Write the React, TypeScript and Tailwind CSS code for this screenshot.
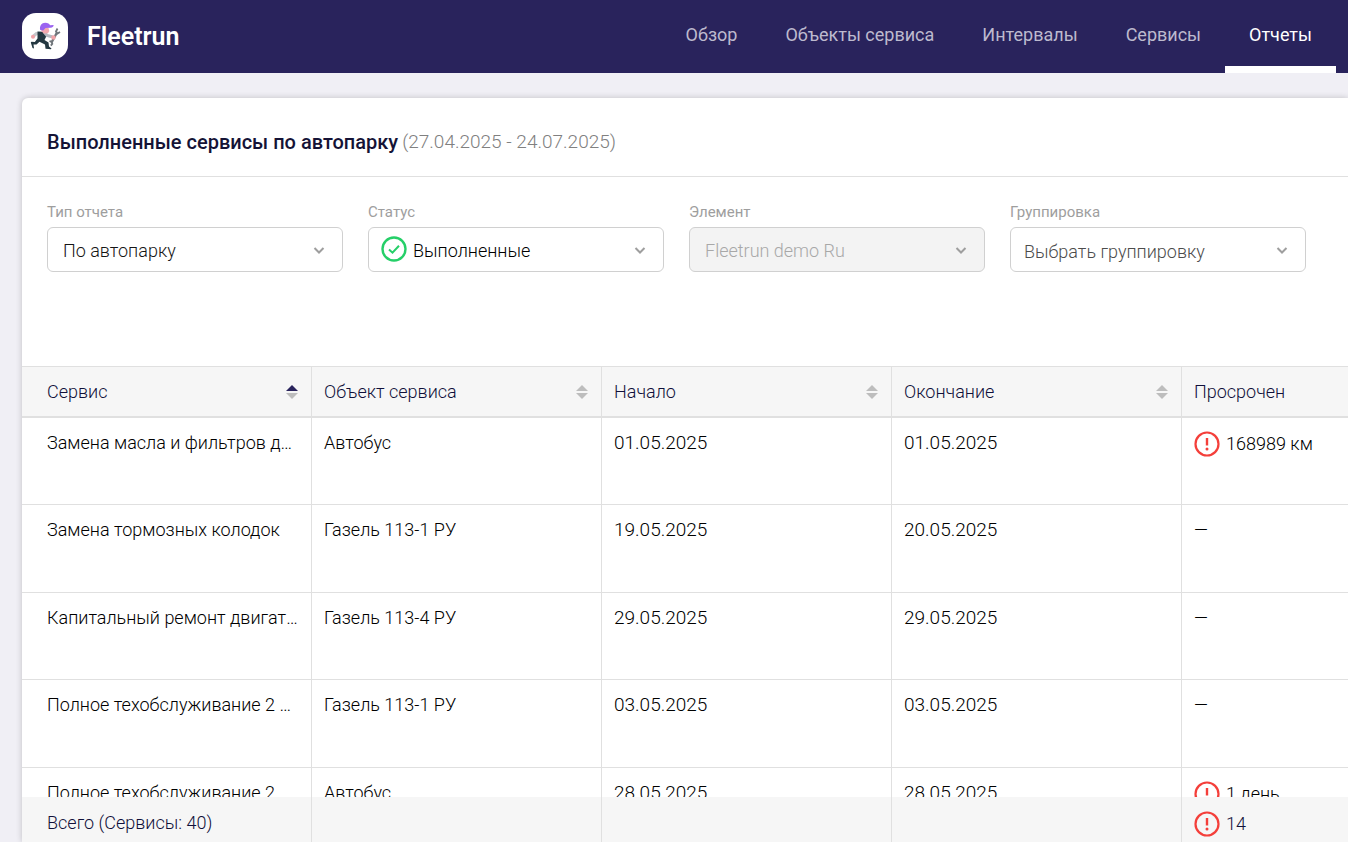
import type { ReactNode } from "react";

const navItems = ["Обзор", "Объекты сервиса", "Интервалы", "Сервисы", "Отчеты"];
const activeItem = "Отчеты";

type Row = {
  service: string;
  unit: string;
  start: string;
  end: string;
  overdue?: string;
};

const rows: Row[] = [
  { service: "Замена масла и фильтров д…", unit: "Автобус", start: "01.05.2025", end: "01.05.2025", overdue: "168989 км" },
  { service: "Замена тормозных колодок", unit: "Газель 113-1 РУ", start: "19.05.2025", end: "20.05.2025" },
  { service: "Капитальный ремонт двигат…", unit: "Газель 113-4 РУ", start: "29.05.2025", end: "29.05.2025" },
  { service: "Полное техобслуживание 2 …", unit: "Газель 113-1 РУ", start: "03.05.2025", end: "03.05.2025" },
  { service: "Полное техобслуживание 2 …", unit: "Автобус", start: "28.05.2025", end: "28.05.2025", overdue: "1 день" },
];

const columns = ["Сервис", "Объект сервиса", "Начало", "Окончание", "Просрочен"];

function Logo() {
  return (
    <svg viewBox="0 0 46 46" className="size-[46px] rounded-[14px] bg-white" aria-hidden="true">
      <path d="M19 20 14.500 20.500 11 23.500" fill="none" stroke="#c4c6ca" strokeWidth="3" strokeLinecap="round" />
      <circle cx="11" cy="23.800" r="2" fill="#f0a3a8" />
      <path d="M15.500 18.500 23 19 24.500 23 22.500 27 26.500 29.500 27 33.500 29.500 35.500 29 36.200 23.500 35.700 23 31.500 17.500 28.800 14.500 31.500 11.500 31.500 12 35.500 10.500 35 8.800 29.500 9.500 28.800 12.800 29 15.500 25.500Z" fill="#243841" />
      <path d="M22.500 19.500 25 22.500 30 23.800" fill="none" stroke="#b4b7be" strokeWidth="3" strokeLinecap="round" />
      <path d="M19 15h7.500l.8 3-1.300 2.300-4 .2-2.500-2Z" fill="#f3a9ae" />
      <path d="M18.200 17c-1-4 1.500-7.200 5-7.200 2.700 0 4.300 1.200 4.800 2.500l3.500-.3c.5 1.500-1 2.500-3 2.800l-5 .3-2.300 2.400Z" fill="#9b63f0" />
      <path d="m29.500 29.500 5.500-10" stroke="#6f767b" strokeWidth="2.400" />
      <path d="m35.500 15.500-1.500 3 1.500 2 2.500-1.500M27.500 28l2 .8.8 2-1.500 1.800" fill="none" stroke="#6f767b" strokeWidth="1.800" />
      <circle cx="31.500" cy="24.500" r="2.200" fill="#f0a3a8" />
    </svg>
  );
}

function AlertIcon() {
  return (
    <svg viewBox="0 0 26 26" className="size-[26px] shrink-0" fill="none" aria-hidden="true">
      <circle cx="13" cy="13" r="11.500" stroke="#f43f3a" strokeWidth="2.200" />
      <path d="M13 7v7.500" stroke="#f43f3a" strokeWidth="2.400" />
      <circle cx="13" cy="18" r="1.500" fill="#f43f3a" />
    </svg>
  );
}

function CheckIcon() {
  return (
    <svg viewBox="0 0 26 26" className="size-[26px]" fill="none" aria-hidden="true">
      <circle cx="13" cy="13" r="11.500" stroke="#25cf68" strokeWidth="2.400" />
      <path d="m8 13.500 3.500 3.200 6.500-7" stroke="#25cf68" strokeWidth="2" />
    </svg>
  );
}

function SortIcon({ active }: { active?: boolean }) {
  return (
    <svg viewBox="0 0 12 14" className="h-[14px] w-3 shrink-0" aria-hidden="true">
      <path d="M0 6 6 0l6 6Z" fill={active ? "#29235c" : "#bdbdbd"} />
      <path d="M0 8h12l-6 6Z" fill="#bdbdbd" />
    </svg>
  );
}

type FilterProps = {
  id: string;
  label: string;
  value: string;
  className: string;
  icon?: ReactNode;
  disabled?: boolean;
};

function Filter({ id, label, value, className, icon, disabled }: FilterProps) {
  return (
    <div className="w-[296px] shrink-0">
      <label htmlFor={id} className="block text-[15px] leading-5 text-[#9e9e9e]">
        {label}
      </label>
      <div className="relative mt-[5px]">
        {icon && <span className="pointer-events-none absolute top-[9px] left-[13px]">{icon}</span>}
        <select
          id={id}
          disabled={disabled}
          className={`h-[45px] w-full appearance-none rounded-md border border-[#d0d0d0] pr-10 text-lg font-light opacity-100 ${className}`}
        >
          <option>{value}</option>
        </select>
        <svg
          viewBox="0 0 12 8"
          className="pointer-events-none absolute top-[20px] right-[18px] h-2 w-3"
          fill="none"
          stroke="#9e9e9e"
          strokeWidth="2"
          aria-hidden="true"
        >
          <path d="m1.500 1 4.500 4.500 4.500-4.500" />
        </svg>
      </div>
    </div>
  );
}

function Overdue({ value }: { value?: string }) {
  if (!value) return <>—</>;
  return (
    <span className="flex items-center gap-1.5">
      <AlertIcon />
      {value}
    </span>
  );
}

export default function App() {
  return (
    <div className="flex h-screen flex-col overflow-hidden bg-[#f0eff5] font-[Roboto,sans-serif] text-black">
      <header className="flex h-[73px] shrink-0 items-center justify-between bg-[#29235c] pr-3 pl-[22px]">
        <a href="#" className="flex items-center gap-[19px] pb-0.5">
          <Logo />
          <span className="pt-0.5 text-[25px] font-semibold text-white">Fleetrun</span>
        </a>
        <nav className="flex h-full">
          {navItems.map((item) => (
            <a
              key={item}
              href="#"
              className={`flex items-center border-y-[7px] border-t-transparent px-6 pb-1 text-lg whitespace-nowrap ${
                item === activeItem ? "border-b-white text-white" : "border-b-transparent text-[#bdbace]"
              }`}
            >
              {item}
            </a>
          ))}
        </nav>
      </header>

      <main className="mt-[25px] ml-[22px] flex min-h-0 flex-1 flex-col rounded-tl-md bg-white shadow-[0_0_6px_rgba(0,0,0,0.2)]">
        <div className="flex h-[79px] shrink-0 items-center gap-1 border-b border-[#e0e0e0] pt-2.5 pl-[25px]">
          <h1 className="text-xl font-medium text-[#151336]">Выполненные сервисы по автопарку</h1>
          <span className="text-[19px] font-light text-[#808080]">(27.04.2025 - 24.07.2025)</span>
        </div>

        <form className="flex h-[189px] shrink-0 gap-[25px] pt-[25px] pl-[25px]">
          <Filter id="type" label="Тип отчета" value="По автопарку" className="pt-0.5 pl-[15px] text-[#151515]" />
          <Filter
            id="status"
            label="Статус"
            value="Выполненные"
            className="pt-0.5 pl-11 text-black"
            icon={<CheckIcon />}
          />
          <Filter
            id="element"
            label="Элемент"
            value="Fleetrun demo Ru"
            className="bg-[#f3f3f3] pt-0.5 pl-[15px] text-[#a8a8a8]"
            disabled
          />
          <Filter id="group" label="Группировка" value="Выбрать группировку" className="pt-1 pl-[13px] text-[#4c4c4c]" />
        </form>

        <div className="min-h-0 flex-1 overflow-auto [scrollbar-width:none]">
          <table className="w-full min-w-[1326px] table-fixed border-separate border-spacing-0 text-left text-lg font-light">
            <colgroup>
              <col className="w-[290px]" />
              <col className="w-[290px]" />
              <col className="w-[290px]" />
              <col className="w-[290px]" />
              <col />
            </colgroup>
            <thead className="sticky top-0 z-10 bg-[#f6f6f6] text-[#10103a]">
              <tr className="h-[52px]">
                {columns.map((column, i) => (
                  <th
                    key={column}
                    className="border-t border-r border-b-2 border-[#e0e0e0] pr-[13px] pl-3 font-light first:pl-[25px] last:border-r-0"
                  >
                    <button type="button" className="flex w-full items-center justify-between">
                      {column}
                      {i < 4 && <SortIcon active={i === 0} />}
                    </button>
                  </th>
                ))}
              </tr>
            </thead>
            <tbody>
              {rows.map((row, i) => (
                <tr key={i} className="align-top odd:h-[87px] even:h-[88px]">
                  <td className="truncate border-r border-b border-[#e0e0e0] pt-[11px] pr-3 pl-[25px]">{row.service}</td>
                  <td className="border-r border-b border-[#e0e0e0] px-3 pt-[11px]">{row.unit}</td>
                  <td className="border-r border-b border-[#e0e0e0] px-3 pt-2.5 text-[19px]">{row.start}</td>
                  <td className="border-r border-b border-[#e0e0e0] px-3 pt-2.5 text-[19px]">{row.end}</td>
                  <td className={`border-b border-[#e0e0e0] px-3 ${row.overdue ? "pt-3" : "pt-[11px]"}`}>
                    <Overdue value={row.overdue} />
                  </td>
                </tr>
              ))}
            </tbody>
            <tfoot className="sticky bottom-0 bg-[#f6f6f6] text-[#10103a]">
              <tr className="h-[45px]">
                <td className="border-r border-[#e0e0e0] pt-1.5 pl-[25px]">Всего (Сервисы: 40)</td>
                <td className="border-r border-[#e0e0e0]" />
                <td className="border-r border-[#e0e0e0]" />
                <td className="border-r border-[#e0e0e0]" />
                <td className="px-3 pt-2">
                  <Overdue value="14" />
                </td>
              </tr>
            </tfoot>
          </table>
        </div>
      </main>
    </div>
  );
}
